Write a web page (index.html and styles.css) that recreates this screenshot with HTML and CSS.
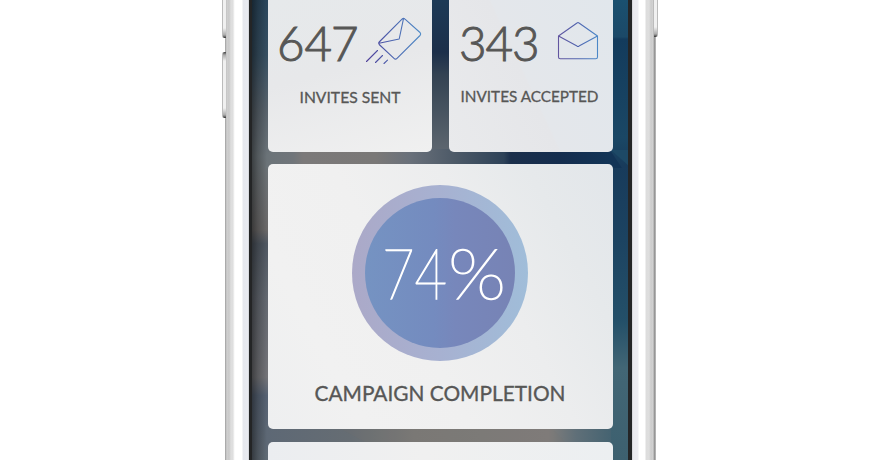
FILE: index.html
```html
<!DOCTYPE html>
<html lang="en">
<head>
<meta charset="utf-8">
<title>Campaign</title>
<link rel="stylesheet" href="styles.css">
</head>
<body>
<div class="phone">
  <i class="button volume-up"></i>
  <i class="button volume-down"></i>
  <i class="button power"></i>
  <main class="screen">
    <svg class="wallpaper" width="383" height="460" viewBox="249 0 383 460" aria-hidden="true">
      <defs>
        <linearGradient id="left" x1="0" y1="0" x2="0" y2="1">
          <stop offset="0" stop-color="#2a465c"/><stop offset=".12" stop-color="#374f61"/><stop offset=".24" stop-color="#58626b"/><stop offset=".34" stop-color="#6b7378"/><stop offset=".5" stop-color="#6a6868"/><stop offset=".53" stop-color="#505862"/><stop offset=".65" stop-color="#636870"/><stop offset=".82" stop-color="#737377"/><stop offset=".86" stop-color="#566273"/><stop offset="1" stop-color="#616b75"/>
        </linearGradient>
        <linearGradient id="middle" x1="0" y1="0" x2="0" y2="1">
          <stop offset="0" stop-color="#1a3554"/><stop offset=".38" stop-color="#1a2f4c"/><stop offset=".65" stop-color="#465969"/><stop offset="1" stop-color="#616b70"/>
        </linearGradient>
        <linearGradient id="right" x1="0" y1="0" x2="0" y2="1">
          <stop offset="0" stop-color="#1a506f"/><stop offset=".08" stop-color="#1b4968"/><stop offset=".085" stop-color="#133b5c"/><stop offset=".3" stop-color="#1a4765"/><stop offset=".36" stop-color="#183b5b"/><stop offset=".52" stop-color="#1c4361"/><stop offset=".7" stop-color="#245069"/><stop offset=".8" stop-color="#426675"/><stop offset="1" stop-color="#3d606f"/>
        </linearGradient>
        <linearGradient id="upper" x1="265" x2="611" y1="0" y2="0" gradientUnits="userSpaceOnUse">
          <stop offset="0" stop-color="#6b7378"/><stop offset=".08" stop-color="#70757a"/><stop offset=".11" stop-color="#7b7979"/><stop offset=".32" stop-color="#7a7877"/><stop offset=".42" stop-color="#69707a"/><stop offset=".55" stop-color="#4c5967"/><stop offset=".69" stop-color="#2e4258"/><stop offset=".71" stop-color="#1b2f4b"/><stop offset=".85" stop-color="#142d4e"/><stop offset="1" stop-color="#123456"/>
        </linearGradient>
        <linearGradient id="lower" x1="265" x2="611" y1="0" y2="0" gradientUnits="userSpaceOnUse">
          <stop offset="0" stop-color="#5d6875"/><stop offset=".25" stop-color="#666d73"/><stop offset=".43" stop-color="#7a7977"/><stop offset=".82" stop-color="#807d7b"/><stop offset=".9" stop-color="#5f6f78"/><stop offset="1" stop-color="#456371"/>
        </linearGradient>
        <linearGradient id="gap" x1="0" y1="0" x2="0" y2="1">
          <stop offset="0" stop-color="#1d3a56"/><stop offset=".35" stop-color="#1c2f4a"/><stop offset=".5" stop-color="#334252"/><stop offset="1" stop-color="#5c656e"/>
        </linearGradient>
        <linearGradient id="shade" x1="0" y1="0" x2="1" y2="0">
          <stop offset="0" stop-color="#000" stop-opacity=".45"/><stop offset=".4" stop-color="#000" stop-opacity=".22"/><stop offset="1" stop-color="#000" stop-opacity="0"/>
        </linearGradient>
      </defs>
      <path fill="url(#middle)" d="M249 0h383v460H249z"/>
      <path fill="url(#left)" d="M249 0h24v460h-24z"/>
      <path fill="url(#right)" d="M608 0h24v460h-24z"/>
      <path fill="url(#upper)" d="M270 147h338l14 21H265z"/>
      <path fill="#1d4966" d="M611 150h19v17z"/>
      <path fill="url(#lower)" d="M265 425h346v24H265z"/>
      <path fill="url(#gap)" d="M427 0h26v149h-26z"/>
      <path fill="#7a736d" opacity=".12" d="M341 429h212l12 13H365z"/>
      <path fill="url(#shade)" d="M252 0h15v460h-15z"/>
    </svg>
    <section class="stats">
      <article class="card stat sent">
        <svg width="164" height="152" viewBox="0 0 164 152">
          <defs><linearGradient id="ink1" x1="98" y1="0" x2="153" y2="0" gradientUnits="userSpaceOnUse"><stop stop-color="#503f99"/><stop offset=".5" stop-color="#4c66b0"/><stop offset="1" stop-color="#4e8bc7"/></linearGradient></defs>
          <text class="number" y="61"><tspan x="9">6</tspan><tspan x="36.500">4</tspan><tspan x="63">7</tspan></text>
          <text class="label" x="31.500" y="103" textLength="101" lengthAdjust="spacingAndGlyphs">INVITES SENT</text>
          <path class="line" stroke="url(#ink1)" d="M111.200 42 L134 19.200Q135.500 17.700 137 19.200L152 32.500Q153.400 34 152 35.500L129 58.300Q127.500 59.800 126 58.300L111.200 44.500Q110 43.200 111.200 42ZM111 43.200L131.200 39L135.500 18.600M98.500 61.500L109.500 50.500M107.500 62.500L114.500 55.500M116 63.500L119.500 60.200"/>
        </svg>
      </article>
      <article class="card stat accepted">
        <svg width="164" height="152" viewBox="0 0 164 152">
          <defs><linearGradient id="ink2" x1="109" y1="0" x2="149" y2="0" gradientUnits="userSpaceOnUse"><stop stop-color="#62559f"/><stop offset=".5" stop-color="#5165af"/><stop offset="1" stop-color="#4b88c8"/></linearGradient></defs>
          <text class="number" y="61"><tspan x="10">3</tspan><tspan x="36.500">4</tspan><tspan x="63">3</tspan></text>
          <text class="label" x="11.500" y="102" textLength="138" lengthAdjust="spacingAndGlyphs">INVITES ACCEPTED</text>
          <path class="line" stroke="url(#ink2)" d="M109.500 36L128 23Q129 22 130 23L148.500 36V57Q148.500 58.800 146.700 58.800H111.300Q109.500 58.800 109.500 57ZM109.500 36L128 46.100Q129 47 130 46.100L148.500 36"/>
        </svg>
      </article>
    </section>
    <article class="card completion">
      <div class="ring"><div class="disc">
        <svg width="150" height="150" viewBox="365 198 150 150"><text class="percent" y="298.500"><tspan x="382" textLength="65" lengthAdjust="spacingAndGlyphs">74</tspan><tspan x="448" textLength="58" lengthAdjust="spacingAndGlyphs">%</tspan></text></svg>
      </div></div>
      <svg class="caption" width="345" height="40" viewBox="268 370 345 40"><text x="314.500" y="400.500" textLength="251" lengthAdjust="spacingAndGlyphs">CAMPAIGN COMPLETION</text></svg>
    </article>
    <article class="card next"></article>
  </main>
</div>
</body>
</html>
```

FILE: styles.css
```css
* { box-sizing: border-box; }

body {
  margin: 0;
  height: 460px;
  overflow: hidden;
  background: #fff;
  font-family: Lato, "Open Sans", sans-serif;
}

.phone {
  position: relative;
  width: 431px;
  height: 460px;
  margin-left: 225px;
  padding: 0 24px;
  background: linear-gradient(90deg,
    #999 0, #bcbcbc 1px, #d0d0d0 2px, #c9c9c9 4px, #dedede 6px, #dedede 8px, #f5f5f5 9px,
    #fff 10px, #fff 17px, #e6e8ee 18px, #e9ebf1 23px, #c8cace 24px,
    #c8cace 407px, #e9e9ee 408px, #ececf1 413px, #fff 414px, #fff 420px,
    #ddd 421px, #dedede 424px, #ccc 426px, #d2d2d2 428px, #a5a5a5 429px, #888 430px, #ddd 431px);
}

.button {
  position: absolute;
  left: -3px;
  width: 4px;
  background: linear-gradient(#444, #aaa 3px, #f0f0f0 9px, #f0f0f0 calc(100% - 10px), #aaa calc(100% - 3px), #333);
  border-left: 1px solid #bbb;
  border-radius: 2px 0 0 2px;
}
.volume-up { top: -20px; height: 58px; }
.volume-down { top: 52px; height: 66px; }
.power { top: -20px; left: auto; right: -2px; height: 57px; transform: scaleX(-1); }

.screen {
  position: relative;
  height: 460px;
  padding: 0 16px;
  overflow: hidden;
  border: solid #242526;
  border-width: 0 4px 0 3px;
}

.wallpaper {
  position: absolute;
  top: 0;
  left: -3px;
}

.stats {
  display: flex;
  gap: 17px;
  height: 152px;
  width: 345px;
  margin-bottom: 12px;
}

.card {
  position: relative;
  width: 345px;
  border-radius: 5px;
}
.card svg { display: block; overflow: visible; }

.stat {
  width: 164px;
  height: 152px;
  border-radius: 0 0 5px 5px;
}
.sent { background: linear-gradient(165deg, #e6e9eb 0%, #e7e8ea 45%, #f0f0f0 100%); }
.accepted { background: linear-gradient(245deg, #e1e7ec 0%, #e4e7eb 52%, #e5e6e9 53%, #e9eaec 100%); }

.number {
  font-size: 47.5px;
  font-weight: 300;
  fill: #575756;
  stroke: #575756;
  stroke-width: 1px;
}
.label {
  font-size: 16px;
  font-weight: 400;
  fill: #575756;
  stroke: #575756;
  stroke-width: .3px;
}
.line {
  fill: none;
  stroke-width: 1.1px;
  stroke-linecap: round;
  stroke-linejoin: round;
}

.completion {
  display: flex;
  flex-direction: column;
  align-items: center;
  height: 265px;
  padding-top: 21px;
  background: linear-gradient(242deg, #e2e6ea 0%, #e6e9eb 18%, #ecedee 36%, #f0f0f0 58%, #f1f1f1 80%, #eeeff0 100%);
}
.ring {
  width: 176px;
  height: 176px;
  margin-right: 1px;
  padding: 13px;
  border-radius: 50%;
  background: linear-gradient(90deg, #aba9c8, #a7b1d1 50%, #a0bdd9);
}
.disc {
  width: 150px;
  height: 150px;
  border-radius: 50%;
  background: linear-gradient(90deg, #7593c2, #748bbf 46%, #7787bb 60%, #7783b5 100%);
}
.percent {
  font-size: 71px;
  font-weight: 100;
  fill: #fff;
  stroke: #fff;
  stroke-width: 1.4px;
}
.caption { margin-top: 9px; }
.caption text {
  font-size: 22px;
  font-weight: 400;
  fill: #575756;
  stroke: #575756;
  stroke-width: .35px;
}

.next {
  height: 30px;
  margin-top: 13px;
  background: linear-gradient(90deg, #ebedf0, #f0f0f0 45%, #eceff1);
}
```
